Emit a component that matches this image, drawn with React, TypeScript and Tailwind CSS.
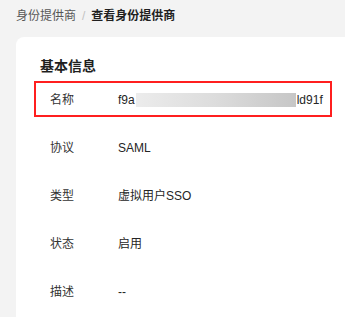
import React from 'react';

const rows = [
  { label: '协议', value: 'SAML' },
  { label: '类型', value: '虚拟用户SSO' },
  { label: '状态', value: '启用' },
  { label: '描述', value: '--' },
];

const App: React.FC = () => {
  return (
    <div
      className="min-h-[317px] w-[345px] overflow-hidden bg-[#f3f3f3] pl-4 pt-[6px]"
      style={{ fontFamily: '"Liberation Sans", "Noto Sans CJK SC", sans-serif' }}
    >
      {/* Breadcrumb */}
      <div className="flex h-5 items-center text-[12px] leading-5">
        <span className="text-[#575757]">身份提供商</span>
        <span className="mx-[6px] text-[#c2c2c2]">/</span>
        <span className="font-bold text-[#1f1f1f]">查看身份提供商</span>
      </div>

      {/* Card */}
      <div className="mt-[11px] min-h-[280px] rounded-tl-lg bg-white pl-6 pt-[19px]">
        <h3 className="text-[14px] font-bold leading-5 text-[#1f1f1f]">基本信息</h3>

        <div className="relative flex h-12 items-center pl-[10px] text-[12px] text-[#252525]">
          <div className="pointer-events-none absolute -left-[6px] top-[5px] h-9 w-[298px] border-2 border-[#ff1f1f]" />
          <span className="w-[68px] text-[#333]">名称</span>
          <span className="flex items-center">
            f9a
            <span className="mx-[1px] inline-block h-[14px] w-[160px] bg-gradient-to-r from-[#ececec] via-[#dcdcdc] to-[#c6c6c6]" />
            ld91f
          </span>
        </div>

        {rows.map((r) => (
          <div key={r.label} className="flex h-12 items-center pl-[10px] text-[12px] text-[#252525]">
            <span className="w-[68px] text-[#333]">{r.label}</span>
            <span>{r.value}</span>
          </div>
        ))}
      </div>
    </div>
  );
};

export default App;
